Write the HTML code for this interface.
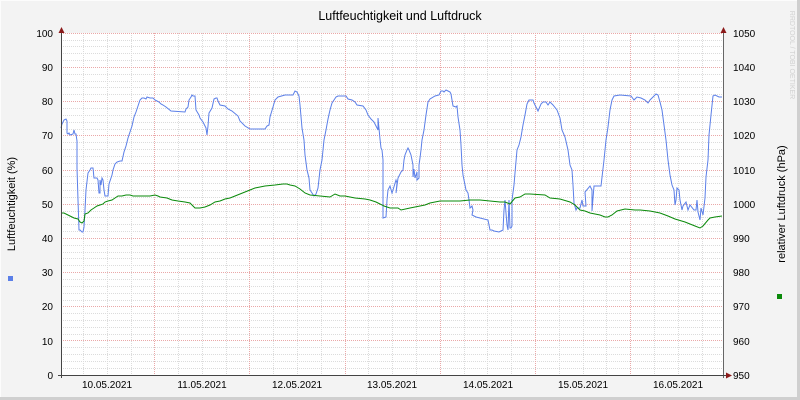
<!DOCTYPE html>
<html><head><meta charset="utf-8"><style>
html,body{margin:0;padding:0;background:#f3f3f3}
svg{display:block}
text{font-family:"Liberation Sans","DejaVu Sans",sans-serif;font-size:10px;fill:#000}
</style></head><body>
<svg width="800" height="400" xmlns="http://www.w3.org/2000/svg">
<rect x="0" y="0" width="800" height="400" fill="#f3f3f3"/>
<line x1="0" y1="0.5" x2="800" y2="0.5" stroke="#fcfcfc"/>
<line x1="0.5" y1="0" x2="0.5" y2="400" stroke="#fcfcfc"/>
<line x1="798.5" y1="0" x2="798.5" y2="400" stroke="#cfcfcf" stroke-width="3"/>
<line x1="0" y1="398.5" x2="800" y2="398.5" stroke="#cfcfcf" stroke-width="3"/>
<rect x="61" y="33" width="662" height="342" fill="#fff"/>
<g id="grid" stroke-width="1" stroke-dasharray="1,1" shape-rendering="crispEdges">
<g stroke="#dcdcdc">
<path d="M61 368.5H723M61 361.5H723M61 354.5H723M61 347.5H723M61 334.5H723M61 327.5H723M61 320.5H723M61 313.5H723M61 300.5H723M61 293.5H723M61 286.5H723M61 279.5H723M61 265.5H723M61 258.5H723M61 252.5H723M61 245.5H723M61 231.5H723M61 224.5H723M61 217.5H723M61 211.5H723M61 197.5H723M61 190.5H723M61 183.5H723M61 176.5H723M61 163.5H723M61 156.5H723M61 149.5H723M61 142.5H723M61 129.5H723M61 122.5H723M61 115.5H723M61 108.5H723M61 94.5H723M61 87.5H723M61 81.5H723M61 74.5H723M61 60.5H723M61 53.5H723M61 46.5H723M61 40.5H723"/>
<path d="M83.5 33V375M107.5 33V375M131.5 33V375M178.5 33V375M202.5 33V375M226.5 33V375M273.5 33V375M297.5 33V375M321.5 33V375M368.5 33V375M392.5 33V375M416.5 33V375M464.5 33V375M487.5 33V375M511.5 33V375M559.5 33V375M583.5 33V375M606.5 33V375M654.5 33V375M678.5 33V375M702.5 33V375"/>
</g>
<g stroke="#eaa8a8">
<path d="M61 340.5H723M61 306.5H723M61 272.5H723M61 238.5H723M61 204.5H723M61 170.5H723M61 135.5H723M61 101.5H723M61 67.5H723M61 33.5H723"/>
<path d="M154.5 33V375M249.5 33V375M345.5 33V375M440.5 33V375M535.5 33V375M630.5 33V375"/>
</g>
</g>
<polyline fill="none" stroke="#5b7fe8" stroke-width="1" points="61,128 62,124 64,120 66,119 67,121 67,133 68,134 69,133 70,135 73,134 74,130 75,134 76,134 77,141 77,168 78,200 79,230 80,230 82,232 83,232 84,227 85,210 86,190 88,173 90,170 91,168 93,168 94,178 97,178 98,180 99,193 100,193 100,180 101,185 102,178 103,180 104,190 105,196 108,196 109,184 112,175 113,170 115,164 117,162 120,161 122,161 124,152 126,146 128,138 130,132 132,126 134,117 136,112 138,106 140,100 142,98 144,98 146,99 147,97 150,98 153,98 155,100 157,101 159,102 161,104 163,105 166,107 171,111 185,112 186,109 188,107 189,100 191,97 192,95 193,96 195,96 196,110 199,115 200,118 203,122 205,126 206,128 207,135 208,126 209,113 212,108 214,99 216,98 217,98 218,101 220,105 225,106 228,109 232,111 238,116 240,121 245,126 250,129 265,129 267,126 269,125 270,117 273,107 275,100 278,97 285,95 293,95 295,91 297,92 299,96 300,105 302,128 304,140 305,155 307,170 309,178 310,190 312,193 314,196 316,194 318,188 320,170 322,160 323,150 324,140 326,130 328,119 330,110 332,103 334,100 336,97 338,96 346,96 348,99 352,100 355,102 357,105 363,106 366,110 368,115 371,119 374,122 376,126 378,130 378,118 380,139 381,148 382,150 383,160 383,180 383,205 383,218 386,217 387,200 388,190 390,186 392,193 393,190 396,180 397,183 396,193 398,178 401,172 403,170 404,160 405,155 407,150 408,148 409,150 411,155 413,165 413,177 414,169 415,178 417,172 417,180 419,178 419,165 420,158 421,150 422,140 424,130 426,115 428,102 430,99 435,96 439,95 441,91 443,91 444,92 446,90 448,91 450,92 451,94 452,100 453,106 456,107 457,106 458,117 460,130 461,145 462,165 463,175 465,185 466,190 468,193 469,200 470,208 472,206 473,210 472,215 476,217 488,220 490,230 492,230 494,231 499,232 503,230 504,210 505,200 506,213 507,225 508,230 509,200 510,228 511,228 512,226 512,200 514,185 515,173 517,150 519,145 521,137 523,125 525,115 527,104 529,100 533,100 534,103 536,107 538,111 541,104 543,102 546,102 548,105 550,102 553,105 557,110 560,118 562,130 565,137 568,150 570,165 572,170 573,185 574,203 576,210 577,208 580,208 582,200 583,206 586,206 585,192 590,186 592,190 592,211 594,186 601,186 604,160 606,140 608,127 610,110 612,100 614,96 620,95 631,96 634,100 637,97 641,98 645,100 648,103 650,100 652,98 654,96 656,94 658,95 660,102 662,110 664,125 666,140 668,160 670,175 672,185 674,190 675,205 676,200 677,188 679,190 680,200 682,210 683,206 686,202 688,210 690,205 694,210 696,210 697,200 698,212 700,220 701,208 703,215 705,198 706,177 708,160 709,135 711,115 713,96 715,95 719,97 722,97"/>
<polyline fill="none" stroke="#0a8a0a" stroke-width="1" points="61,213 64,213 70,216 74,218 78,219 80,222 82,223 84,221 85,214 88,213 91,210 94,208 97,206 100,205 103,204 105,202 108,201 112,200 115,198 118,196 122,196 126,195 130,195 133,196 150,196 155,195 158,196 160,197 167,198 172,200 178,201 185,202 190,203 195,208 200,208 205,207 210,205 215,202 220,201 225,199 230,198 235,196 240,194 245,192 250,190 255,188 260,187 265,186 275,185 283,184 287,184 290,185 295,186 300,189 305,193 310,195 320,196 330,197 335,194 340,196 345,196 350,197 355,198 365,199 370,200 376,202 380,204 384,206 390,208 398,208 401,210 410,208 420,206 425,205 430,203 440,201 450,201 460,201 470,200 480,200 490,201 500,202 505,202 510,204 515,198 520,197 525,194 530,194 545,195 550,198 560,199 570,202 575,205 580,210 585,211 590,213 595,214 600,215 605,217 608,217 612,215 617,211 625,209 635,210 640,210 650,211 660,213 668,216 675,219 685,222 695,226 700,228 703,226 708,220 710,218 715,217 722,216"/>
<line x1="61.5" y1="28" x2="61.5" y2="378" stroke="#444"/>
<line x1="723.5" y1="28" x2="723.5" y2="378" stroke="#666"/>
<line x1="58" y1="375.5" x2="728" y2="375.5" stroke="#444"/>
<path d="M58.5 33L61.5 27L64.5 33Z" fill="#8b1a1a"/>
<path d="M720.5 33L723.5 27L726.5 33Z" fill="#8b1a1a"/>
<path d="M726 372.5L732 375.5L726 378.5Z" fill="#8b1a1a"/>
<g text-anchor="end">
<text x="53" y="37">100</text><text x="53" y="71">90</text><text x="53" y="105">80</text><text x="53" y="139">70</text><text x="53" y="174">60</text><text x="53" y="208">50</text><text x="53" y="242">40</text><text x="53" y="276">30</text><text x="53" y="310">20</text><text x="53" y="345">10</text><text x="53" y="379">0</text>
</g>
<g>
<text x="733" y="37">1050</text><text x="733" y="71">1040</text><text x="733" y="105">1030</text><text x="733" y="139">1020</text><text x="733" y="174">1010</text><text x="733" y="208">1000</text><text x="733" y="242">990</text><text x="733" y="276">980</text><text x="733" y="310">970</text><text x="733" y="345">960</text><text x="733" y="379">950</text>
</g>
<g text-anchor="middle">
<text x="107" y="388">10.05.2021</text><text x="202" y="388">11.05.2021</text><text x="297" y="388">12.05.2021</text><text x="392" y="388">13.05.2021</text><text x="488" y="388">14.05.2021</text><text x="583" y="388">15.05.2021</text><text x="678" y="388">16.05.2021</text>
<text x="400" y="20" style="font-size:12.5px">Luftfeuchtigkeit und Luftdruck</text>
<text transform="translate(15,204) rotate(-90)" style="font-size:11px">Luftfeuchtigkeit (%)</text>
<text transform="translate(785,204) rotate(-90)" style="font-size:11px">relativer Luftdruck (hPa)</text>
<text transform="translate(790,55) rotate(90)" style="font-size:7px;fill:#d0d0d0">RRDTOOL / TOBI OETIKER</text>
</g>
<rect x="8" y="276" width="5" height="5" fill="#5b7fe8"/>
<rect x="777" y="294" width="5" height="5" fill="#0a8a0a"/>
</svg>
</body></html>
